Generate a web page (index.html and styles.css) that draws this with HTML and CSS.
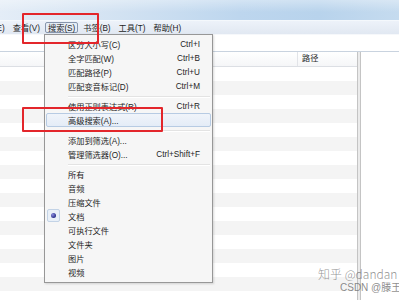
FILE: index.html
```html
<!DOCTYPE html>
<html>
<head>
<meta charset="utf-8">
<link rel="stylesheet" href="styles.css">
</head>
<body>
<div class="screen">
  <div class="titlebar"></div>
  <div class="menubar">
    <span class="mitem first">编辑(E)</span>
    <span class="mitem">查看(V)</span>
    <span class="mitem active">搜索(S)</span>
    <span class="mitem">书签(B)</span>
    <span class="mitem">工具(T)</span>
    <span class="mitem">帮助(H)</span>
  </div>
  <div class="searchrow"></div>
  <div class="main">
    <div class="table">
      <div class="thead">
        <div class="th name"></div>
        <div class="th path">路径</div>
      </div>
      <div class="row"></div><div class="row"></div><div class="row"></div><div class="row"></div>
      <div class="row"></div><div class="row"></div><div class="row"></div><div class="row"></div>
      <div class="row"></div><div class="row"></div><div class="row"></div><div class="row"></div>
      <div class="row"></div><div class="row"></div><div class="row"></div><div class="row"></div>
      <div class="row"></div>
    </div>
    <div class="splitter"></div>
    <div class="side"></div>
  </div>

  <div class="dropdown">
    <div class="di"><span class="lbl">区分大小写(C)</span><span class="key">Ctrl+I</span></div>
    <div class="di"><span class="lbl">全字匹配(W)</span><span class="key">Ctrl+B</span></div>
    <div class="di"><span class="lbl">匹配路径(P)</span><span class="key">Ctrl+U</span></div>
    <div class="di"><span class="lbl">匹配变音标记(D)</span><span class="key">Ctrl+M</span></div>
    <div class="sep"></div>
    <div class="di"><span class="lbl">使用正则表达式(R)</span><span class="key">Ctrl+R</span></div>
    <div class="di hl"><span class="lbl">高级搜索(A)...</span><span class="key"></span></div>
    <div class="sep"></div>
    <div class="di"><span class="lbl">添加到筛选(A)...</span><span class="key"></span></div>
    <div class="di"><span class="lbl">管理筛选器(O)...</span><span class="key">Ctrl+Shift+F</span></div>
    <div class="sep"></div>
    <div class="di"><span class="lbl">所有</span><span class="key"></span></div>
    <div class="di"><span class="lbl">音频</span><span class="key"></span></div>
    <div class="di"><span class="lbl">压缩文件</span><span class="key"></span></div>
    <div class="di checked"><span class="radio"><span class="dot"></span></span><span class="lbl">文档</span><span class="key"></span></div>
    <div class="di"><span class="lbl">可执行文件</span><span class="key"></span></div>
    <div class="di"><span class="lbl">文件夹</span><span class="key"></span></div>
    <div class="di"><span class="lbl">图片</span><span class="key"></span></div>
    <div class="di"><span class="lbl">视频</span><span class="key"></span></div>
  </div>

  <div class="redbox box1"></div>
  <div class="redbox box2"></div>

  <div class="watermark">
    <div class="wm1">知乎 @dandan</div>
    <div class="wm2">CSDN @滕王阁序</div>
  </div>
</div>
</body>
</html>
```

FILE: styles.css
```css
html, body {
  margin: 0;
  padding: 0;
}
body {
  width: 399px;
  height: 300px;
  overflow: hidden;
  background: #ffffff;
  font-family: "Liberation Sans", "Noto Sans CJK SC", sans-serif;
  font-size: 8.2px;
  color: #1e1e1e;
}
.screen {
  position: relative;
  width: 399px;
  height: 300px;
  overflow: hidden;
}
.titlebar {
  height: 20px;
  background:
    linear-gradient(to bottom, rgba(255,255,255,0.35), rgba(255,255,255,0) 60%),
    linear-gradient(to right, #e4edf7 0%, #d2e2f2 30%, #bdd6ee 60%, #b8d3ec 80%, #c5dbef 100%);
  border-bottom: 1px solid #f4f8fc;
}
.menubar {
  height: 13px;
  display: flex;
  align-items: center;
  background: linear-gradient(to bottom, #edf2f9, #e1e8f2);
  border-bottom: 1px solid #f6f8fb;
  white-space: nowrap;
}
.mitem {
  height: 11px;
  line-height: 11px;
  padding: 0 3px;
  margin-right: 2px;
  box-sizing: border-box;
  border: 1px solid transparent;
  border-left-width: 0;
  border-right-width: 0;
}
.mitem.first {
  margin-left: -25.6px;
}
.mitem.active {
  border: 1px solid #8796ac;
  border-radius: 2px;
  background: #e6edf6;
  padding: 0 2px;
}
.searchrow {
  height: 16px;
  background: #ffffff;
  border-bottom: 1px solid #c9d3df;
}
.main {
  display: flex;
  height: 249px;
}
.table {
  width: 357px;
  flex: none;
}
.thead {
  display: flex;
  height: 14px;
  border-bottom: 1px solid #dcdfe4;
  background: linear-gradient(to bottom, #ffffff, #f5f6f8);
}
.th {
  line-height: 14px;
  color: #2a2a2a;
}
.th.name {
  width: 298px;
  border-right: 1px solid #e2e4e8;
  box-sizing: border-box;
}
.th.path {
  padding-left: 4px;
}
.row {
  height: 14px;
}
.row:nth-of-type(odd) {
  background: #f4f4f4;
}
.splitter {
  width: 2px;
  flex: none;
  background: #ebebeb;
  border-left: 1px solid #c4c4c4;
  border-right: 1px solid #c4c4c4;
}
.side {
  flex: 1;
  background: #ffffff;
}

/* Dropdown menu overlay */
.dropdown {
  position: absolute;
  left: 44px;
  top: 34px;
  width: 167px;
  padding: 2px 0 3px;
  background: #f6f6f6;
  border: 1px solid #979797;
  box-shadow: 1px 1px 2px rgba(0,0,0,0.15);
}
.di {
  display: flex;
  align-items: center;
  height: 14px;
  margin: 0 1px;
  padding-left: 22px;
  padding-right: 11px;
  position: relative;
  white-space: nowrap;
  color: #1e1e1e;
  box-sizing: border-box;
}
.di .lbl {
  flex: 1;
}
.di .key {
  text-align: right;
}
.di.hl {
  background: linear-gradient(to bottom, #f0f4fa, #e4ecf7);
  border: 1px solid #b7cbe3;
  border-radius: 2px;
  padding-left: 21px;
  padding-right: 10px;
}
.sep {
  height: 6px;
  margin-left: 23px;
  margin-right: 2px;
  display: flex;
  align-items: center;
}
.sep::before {
  content: "";
  display: block;
  width: 100%;
  height: 1px;
  background: #e3e3e3;
  box-shadow: 0 1px 0 #ffffff;
}
.radio {
  position: absolute;
  left: 1px;
  top: 0;
  width: 13px;
  height: 13px;
  box-sizing: border-box;
  border: 1px solid #c3d3e6;
  border-radius: 2px;
  background: #e9f0f8;
  display: flex;
  align-items: center;
  justify-content: center;
}
.dot {
  width: 5px;
  height: 5px;
  border-radius: 50%;
  background: radial-gradient(circle at 35% 35%, #8c8ee0, #2a2f8a 70%);
}

/* Annotation boxes */
.redbox {
  position: absolute;
  border: 2px solid #e3262b;
  border-radius: 1px;
  box-sizing: border-box;
}
.box1 {
  left: 22px;
  top: 13px;
  width: 77px;
  height: 31px;
}
.box2 {
  left: 22px;
  top: 107px;
  width: 141px;
  height: 25px;
}

/* Watermark */
.watermark {
  position: absolute;
  left: 318px;
  top: 265px;
  white-space: nowrap;
}
.wm1 {
  font-family: "Noto Sans CJK SC", "Liberation Sans", sans-serif;
  font-size: 12px;
  line-height: 17px;
  color: rgba(110,110,110,0.75);
  font-weight: 300;
}
.wm2 {
  padding-left: 22px;
  font-family: "Liberation Sans", "Noto Sans CJK SC", sans-serif;
  font-size: 10px;
  line-height: 12px;
  color: rgba(110,110,110,0.8);
}
```
